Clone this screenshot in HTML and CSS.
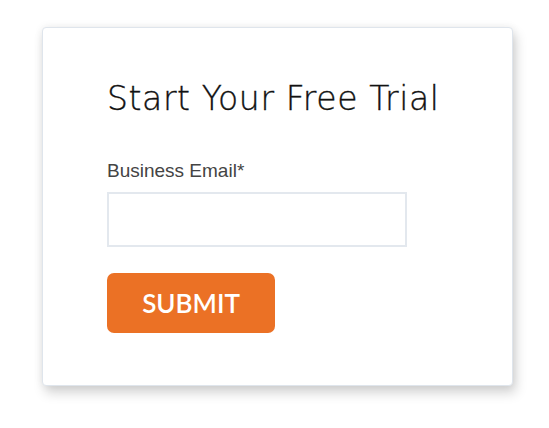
FILE: index.html
```html
<!DOCTYPE html>
<html lang="en">
<head>
<meta charset="utf-8">
<title>Start Your Free Trial</title>
<link rel="stylesheet" href="styles.css">
</head>
<body>
<div class="card">
  <h1 class="title">Start Your Free Trial</h1>
  <form class="form">
    <label class="label" for="email">Business Email*</label>
    <input class="input" id="email" type="email">
    <button class="submit" type="button">SUBMIT</button>
  </form>
</div>
</body>
</html>
```

FILE: styles.css
```css
html, body {
  margin: 0;
  padding: 0;
  background: #ffffff;
}
body {
  box-sizing: border-box;
  min-height: 428px;
  padding: 27px 0 0 42px;
}
.card {
  box-sizing: border-box;
  width: 471px;
  height: 359px;
  background: #ffffff;
  border: 1px solid #dfe5ec;
  border-radius: 4px;
  box-shadow: 0 0 8px rgba(0, 0, 0, 0.07), 3px 7px 12px rgba(0, 0, 0, 0.17);
  padding: 0 0 0 64px;
}
.title {
  margin: 0;
  padding-top: 49px;
  font-family: "DejaVu Sans", sans-serif;
  font-weight: 200;
  font-size: 33px;
  line-height: 44px;
  letter-spacing: 0.6px;
  color: #111111;
  -webkit-text-stroke: 0.35px #111111;
}
.form {
  display: flex;
  flex-direction: column;
  align-items: flex-start;
  margin-top: 39px;
}
.label {
  font-family: "Liberation Sans", Arial, sans-serif;
  font-size: 19px;
  line-height: 22px;
  color: #444444;
}
.input {
  box-sizing: border-box;
  width: 300px;
  height: 55px;
  margin-top: 10px;
  border: 2px solid #e3e8ee;
  border-radius: 0;
  background: #ffffff;
  outline: none;
}
.submit {
  box-sizing: border-box;
  width: 168px;
  height: 60px;
  margin-top: 26px;
  border: none;
  border-radius: 7px;
  background: #eb7125;
  color: #ffffff;
  font-family: Lato, "Open Sans", sans-serif;
  font-weight: 600;
  font-size: 26px;
  padding: 0;
}
```
